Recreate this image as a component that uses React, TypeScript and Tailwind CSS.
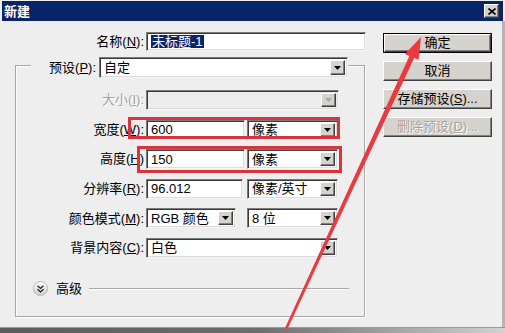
import type { ReactNode } from "react";

const sunken =
  "border border-t-[#7a7a7a] border-l-[#7a7a7a] border-b-[#f4f4f4] border-r-[#f4f4f4] shadow-[inset_1px_1px_0_#3a3a3a,inset_-1px_-1px_0_#dcdcdc]";
const raised =
  "border border-t-white border-l-white border-b-[#404040] border-r-[#404040] shadow-[inset_-1px_-1px_0_#808080]";

const DropArrow = ({ disabled }: { disabled?: boolean }) => (
  <div className={`w-[15px] flex items-center justify-center bg-[#d6d3ce] ${raised}`}>
    <svg width="7" height="4" viewBox="0 0 7 4">
      <path d="M0 0h7L3.5 4z" fill={disabled ? "#a7a7a7" : "#000"} />
    </svg>
  </div>
);

const Field = ({
  w,
  select,
  disabled,
  children,
}: {
  w: string;
  select?: boolean;
  disabled?: boolean;
  children?: ReactNode;
}) => (
  <div className={`${w} h-full flex p-[2px] ${disabled ? "bg-[#ececec]" : "bg-white"} ${sunken}`}>
    <div className="flex-1 flex items-center pl-[2px] leading-none whitespace-nowrap">{children}</div>
    {select && <DropArrow disabled={disabled} />}
  </div>
);

const Row = ({ label, disabled, children }: { label: ReactNode; disabled?: boolean; children: ReactNode }) => (
  <div className="flex items-center h-[20px]">
    <div
      className={`w-[130px] pr-[2px] text-right whitespace-nowrap ${
        disabled ? "text-[#a3a3a3] [text-shadow:1px_1px_0_#fff]" : "text-black"
      }`}
    >
      {label}
    </div>
    {children}
  </div>
);

const Btn = ({ children, primary, disabled }: { children: ReactNode; primary?: boolean; disabled?: boolean }) => (
  <div className={`w-[109px] h-[20px] flex ${primary ? "border border-black" : ""}`}>
    <div
      className={`flex-1 flex items-center justify-center bg-[#d6d3ce] whitespace-nowrap ${raised} ${
        disabled ? "text-[#a3a3a3] [text-shadow:1px_1px_0_#fff]" : "text-black"
      }`}
    >
      {children}
    </div>
  </div>
);

const U = ({ c }: { c: string }) => <span className="underline">{c}</span>;

export default function App() {
  return (
    <div className="relative w-[505px] h-[333px] pt-[1px] bg-[#eeeeee] text-[13px] font-['Liberation_Sans','Noto_Sans_CJK_SC',sans-serif] overflow-hidden">
      {/* title bar */}
      <div className="mx-[2px] h-[20px] bg-[#0a246a] flex items-center justify-between pl-[2px] pr-[4px]">
        <span className="text-white font-bold text-[13px] font-['Noto_Sans_CJK_SC',sans-serif]">新建</span>
        <div className={`w-[15px] h-[14px] flex items-center justify-center bg-[#d6d3ce] ${raised}`}>
          <svg width="8" height="7" viewBox="0 0 8 7">
            <path d="M0.5 0.5L7.5 6.5M7.5 0.5L0.5 6.5" stroke="#000" strokeWidth="1.6" />
          </svg>
        </div>
      </div>

      <div className="h-[306px] flex">
        {/* left column */}
        <div className="w-[383px]">
          <div className="mt-[11px] h-[19px] flex items-center">
            <div className="w-[146px] pr-[2px] text-right">
              名称(<U c="N" />):
            </div>
            <Field w="w-[220px]">
              <span className="bg-[#0a246a] text-white px-[1px]">未标题-1</span>
            </Field>
          </div>

          <div className="mt-[14px] ml-[15px] w-[350px] h-[252px] border border-[#a6a6a6] shadow-[1px_1px_0_#fff,inset_1px_1px_0_#fff]">
            <div className="-mt-[9px] h-[21px] flex items-center">
              <div className="w-[15px]" />
              <div className="w-[68px] h-full flex items-center justify-end pr-[3px] bg-[#eeeeee]">
                预设(<U c="P" />):
              </div>
              <Field w="w-[249px]" select>
                自定
              </Field>
            </div>

            <div className="mt-[12px] flex flex-col gap-[9.6px]">
              <Row
                disabled
                label={
                  <>
                    大小(<U c="I" />):
                  </>
                }
              >
                <Field w="w-[193px]" select disabled />
              </Row>
              <Row
                label={
                  <>
                    宽度(<U c="W" />):
                  </>
                }
              >
                <Field w="w-[99px]">600</Field>
                <div className="w-[2px]" />
                <Field w="w-[91px]" select>
                  像素
                </Field>
              </Row>
              <Row
                label={
                  <>
                    高度(<U c="H" />)
                  </>
                }
              >
                <Field w="w-[99px]">150</Field>
                <div className="w-[2px]" />
                <Field w="w-[91px]" select>
                  像素
                </Field>
              </Row>
              <Row
                label={
                  <>
                    分辨率(<U c="R" />):
                  </>
                }
              >
                <Field w="w-[97px]">96.012</Field>
                <div className="w-[4px]" />
                <Field w="w-[91px]" select>
                  像素/英寸
                </Field>
              </Row>
              <Row
                label={
                  <>
                    颜色模式(<U c="M" />):
                  </>
                }
              >
                <Field w="w-[90px]" select>
                  RGB 颜色
                </Field>
                <div className="w-[11px]" />
                <Field w="w-[91px]" select>
                  8 位
                </Field>
              </Row>
              <Row
                label={
                  <>
                    背景内容(<U c="C" />):
                  </>
                }
              >
                <Field w="w-[192px]" select>
                  白色
                </Field>
              </Row>
            </div>

            <div className="mt-[23px] ml-[17px] flex items-center h-[16px]">
              <div className="w-[15px] h-[15px] rounded-full bg-gradient-to-b from-white to-[#cfcfcf] border border-[#b5b5b5] flex items-center justify-center">
                <svg width="7" height="8" viewBox="0 0 7 8">
                  <path d="M0.5 0.8L3.5 3.5L6.5 0.8M0.5 4.3L3.5 7L6.5 4.3" stroke="#222" strokeWidth="1.3" fill="none" />
                </svg>
              </div>
              <span className="ml-[8px]">高级</span>
              <div className="ml-[7px] flex-1 mr-[15px] h-[2px] border-t border-[#a6a6a6] border-b border-b-white" />
            </div>
          </div>
        </div>

        {/* right column */}
        <div className="pt-[12px] flex flex-col gap-[8px]">
          <Btn primary>确定</Btn>
          <Btn>取消</Btn>
          <Btn>
            存储预设(<U c="S" />)...
          </Btn>
          <Btn disabled>
            删除预设(<U c="D" />)...
          </Btn>
        </div>
        <div className="ml-auto w-[3px] bg-[#b4b4b4]" />
      </div>

      <div className="h-[6px] border-t border-[#9a9a9a] bg-gradient-to-r from-[#5c5c5c] via-[#6c6c6c] to-[#d2d2d2]" />

      {/* annotation overlays */}
      <div className="absolute left-[128px] top-[117px] w-[212px] h-[22px] border-[3px] border-[#d8343d]" />
      <div className="absolute left-[137px] top-[146px] w-[205px] h-[27px] border-[3px] border-[#d8343d]" />
      <svg className="absolute inset-0 pointer-events-none" width="505" height="333" viewBox="0 0 505 333">
        <polygon
          points="421,37 418.6,60.1 414.2,58.1 287.2,329.5 284.8,328.5 409.4,55.9 405,53.9"
          fill="#ea3a40"
        />
      </svg>
    </div>
  );
}
